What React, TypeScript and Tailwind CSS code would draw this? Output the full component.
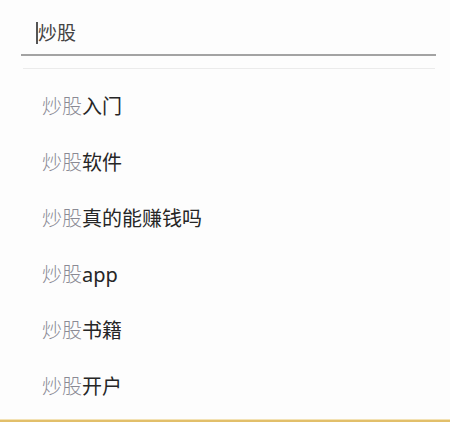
export default function App() {
  const suggestions = ['入门', '软件', '真的能赚钱吗', 'app', '书籍', '开户'];

  return (
    <div className="flex h-[422px] w-[450px] flex-col overflow-hidden bg-[#fdfdfd] font-['Noto_Sans','Noto_Sans_CJK_SC',sans-serif]">
      {/* Search input */}
      <div className="ml-[21px] w-[415px] border-b-2 border-[#a3a3a3] pb-[8px] pt-[20px]">
        <div className="flex h-[26px] items-center pl-[15px] text-[19px] leading-[26px] text-[#444]">
          <span className="h-[22px] w-[2px] bg-[#555]" />
          炒股
        </div>
      </div>

      <div className="ml-[23px] mt-[12px] h-px w-[412px] bg-[#ebebeb]" />

      {/* Suggestions */}
      <ul className="mt-[10px] flex flex-col">
        {suggestions.map((s) => (
          <li key={s} className="flex h-[56px] items-center pl-[42px] text-[20px] leading-[26px]">
            <span className="font-light text-[#8a8a94]">炒股</span>
            <span className="text-[#262626]">{s}</span>
          </li>
        ))}
      </ul>

      <div className="mt-auto h-[3px] w-full border-t border-[#f3e2b5] bg-[#e2bf6a]" />
    </div>
  );
}
